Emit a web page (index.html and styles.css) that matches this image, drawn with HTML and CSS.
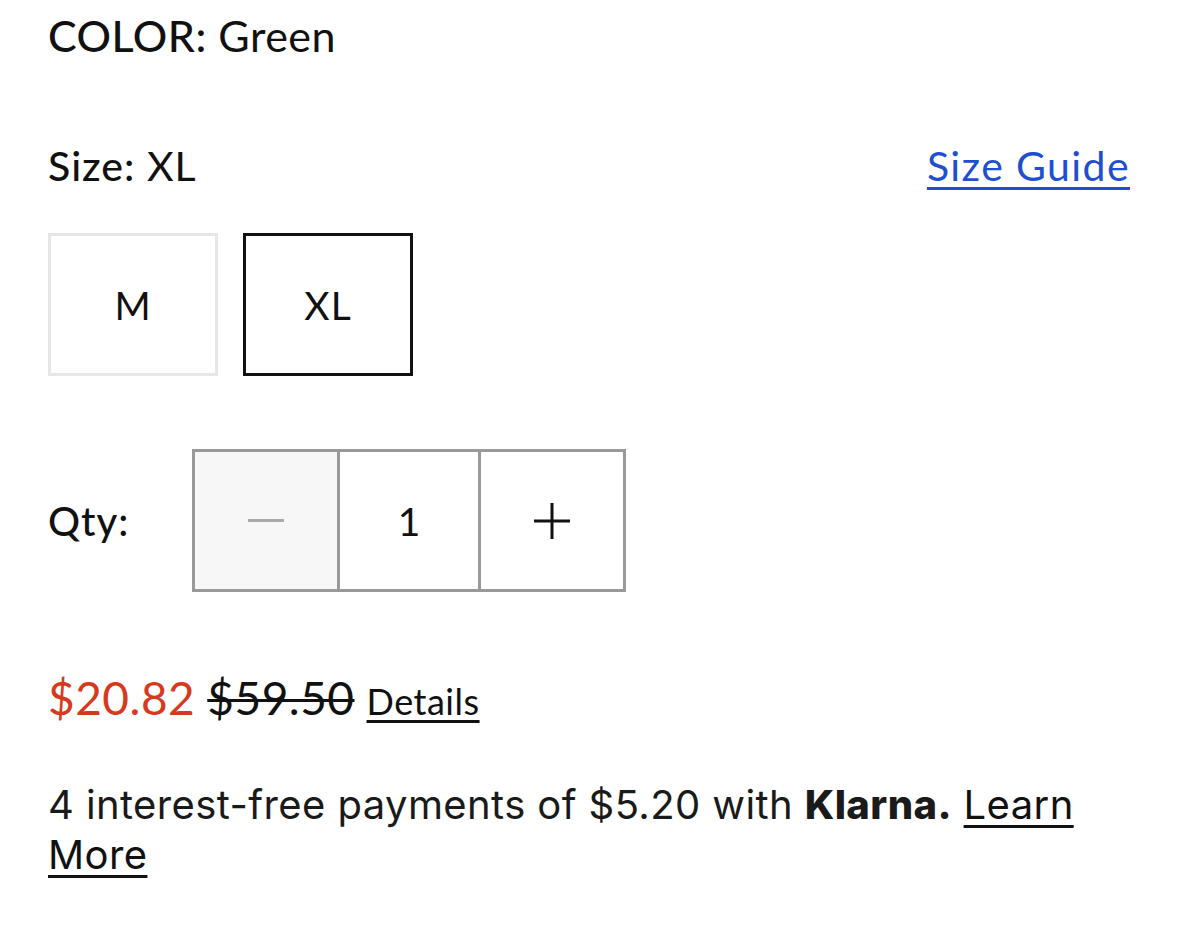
FILE: index.html
```html
<!DOCTYPE html>
<html>
<head>
<meta charset="utf-8">
<link rel="stylesheet" href="styles.css">
</head>
<body>
<div class="product">
  <div class="color-row"><span class="label-strong">COLOR:</span> Green</div>
  <div class="size-head">
    <div class="size-label"><span class="label-strong">Size:</span> XL</div>
    <a class="size-guide" href="#">Size Guide</a>
  </div>
  <div class="sizes">
    <div class="size-btn">M</div>
    <div class="size-btn selected">XL</div>
  </div>
  <div class="qty-row">
    <span class="qty-label">Qty:</span>
    <div class="qty">
      <div class="qty-cell minus"><span class="minus-bar"></span></div>
      <div class="qty-cell value">1</div>
      <div class="qty-cell plus">
        <svg width="38" height="38" viewBox="0 0 38 38"><path d="M19 1v36M1 19h36" stroke="#111" stroke-width="3" fill="none"/></svg>
      </div>
    </div>
  </div>
  <div class="price-row">
    <span class="sale">$20.82</span>
    <span class="orig">$59.50</span>
    <a class="details" href="#">Details</a>
  </div>
  <p class="klarna">4 interest-free payments of $5.20 with <b>Klarna.</b> <a href="#">Learn</a><br><a href="#">More</a></p>
</div>
</body>
</html>
```
FILE: styles.css
```css
html, body {
  margin: 0;
  padding: 0;
  background: #fff;
}
body {
  font-family: "Lato", "Noto Sans", sans-serif;
  color: #111;
}
.product {
  padding: 0 49px 0 48px;
}
.color-row {
  font-size: 43px;
  line-height: 1;
  padding-top: 14px;
  letter-spacing: 0.5px;
}
.label-strong {
  font-weight: 500;
}
.size-head {
  display: flex;
  justify-content: space-between;
  align-items: baseline;
  margin-top: 88px;
  font-size: 41px;
  line-height: 1;
  letter-spacing: 1px;
}
.size-guide {
  color: #1f4fd1;
  text-decoration: underline;
  text-underline-offset: 6px;
  text-decoration-thickness: 3px;
  letter-spacing: 1.4px;
}
.sizes {
  display: flex;
  gap: 25px;
  margin-top: 47px;
}
.size-btn {
  width: 170px;
  height: 143px;
  box-sizing: border-box;
  border: 3px solid #e6e6e6;
  display: flex;
  align-items: center;
  justify-content: center;
  font-size: 39px;
  letter-spacing: 1px;
}
.size-btn.selected {
  border-color: #111;
}
.qty-row {
  display: flex;
  align-items: center;
  margin-top: 73px;
}
.qty-label {
  font-size: 40px;
  font-weight: 500;
  width: 144px;
  letter-spacing: 1px;
}
.qty {
  display: flex;
  border: 3px solid #999;
  height: 143px;
  box-sizing: border-box;
}
.qty-cell {
  display: flex;
  align-items: center;
  justify-content: center;
  font-size: 39px;
}
.qty-cell + .qty-cell {
  border-left: 3px solid #999;
}
.qty-cell.minus {
  background: #f7f7f7;
  width: 142px;
}
.qty-cell.value {
  width: 138px;
}
.qty-cell.plus {
  width: 142px;
}
.minus-bar {
  width: 36px;
  height: 3px;
  background: #aaa;
}
.price-row {
  margin-top: 78px;
  display: flex;
  align-items: baseline;
  gap: 12px;
}
.sale {
  color: #d63a1e;
  font-size: 46px;
  letter-spacing: 0.5px;
}
.orig {
  font-size: 46px;
  text-decoration: line-through;
  text-decoration-thickness: 3px;
  letter-spacing: 0.5px;
}
.details {
  color: #111;
  font-size: 36px;
  text-decoration: underline;
  text-decoration-thickness: 3px;
  text-underline-offset: 5px;
  letter-spacing: 0.5px;
}
.klarna {
  font-family: "Inter", "Noto Sans", sans-serif;
  font-size: 40px;
  line-height: 50px;
  margin: 55px 0 0 0;
  color: #1a1a1a;
  letter-spacing: 0.4px;
}
.klarna b {
  font-weight: 800;
}
.klarna a {
  color: #111;
  text-decoration: underline;
  text-decoration-thickness: 3px;
  text-underline-offset: 6px;
}
```
